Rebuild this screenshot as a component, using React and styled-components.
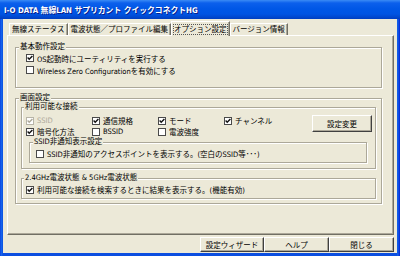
import React from "react";
import styled, { createGlobalStyle } from "styled-components";

const GlobalStyle = createGlobalStyle`
  html, body {
    margin: 0;
    padding: 0;
    background: #ece9d8;
  }
  body {
    font-family: "DejaVu Sans Condensed", "Liberation Sans", "Noto Sans CJK JP", sans-serif;
    font-size: 7.5px;
    color: #000;
  }
`;

const Window = styled.div`
  width: 400px;
  height: 256px;
  display: flex;
  flex-direction: column;
  background: linear-gradient(to right, #0831d9 0, #166aee 1px, #0b4ee0 3px, #0b4ee0 397px, #166aee 398px, #0831d9 399px);
  overflow: hidden;
`;

const TitleBar = styled.div`
  height: 19px;
  flex: none;
  display: flex;
  align-items: center;
  padding: 0 0 1px 4px;
  box-sizing: border-box;
  background: linear-gradient(
    to bottom,
    #3b8cf5 0,
    #2b7cf2 1px,
    #0c60ec 3px,
    #0057e6 9px,
    #0054e3 14px,
    #0148cf 17px,
    #003ec0 19px
  );
  color: #fff;
  font-weight: bold;
  font-size: 7.8px;
  text-shadow: 1px 1px 0 #0a1e8a;
  white-space: nowrap;
`;

const Client = styled.div`
  flex: 1;
  margin: 0 3px 3px 3px;
  background: #ece9d8;
  display: flex;
  flex-direction: column;
`;

const TabRow = styled.div`
  height: 14px;
  margin-top: 2px;
  padding-left: 6px;
  display: flex;
  align-items: flex-end;
  position: relative;
  z-index: 1;
`;

const Tab = styled.div`
  box-sizing: border-box;
  height: ${(p) => (p.$active ? "15px" : "12px")};
  margin-bottom: ${(p) => (p.$active ? "-1px" : "0")};
  padding: ${(p) => (p.$active ? "1px 1px 0" : "0 2px")};
  display: flex;
  align-items: center;
  white-space: nowrap;
  background: #ece9d8;
  border-top: 1px solid #fff;
  border-left: 1px solid #fff;
  border-right: 1px solid #716f64;
  box-shadow: inset -1px 0 #aca899;
  line-height: 10px;
`;

const FocusLabel = styled.span`
  border: 1px dotted #555;
  line-height: 9px;
  padding: 0;
`;

const Panel = styled.div`
  box-sizing: border-box;
  height: 200px;
  margin: 0 3px 0 4px;
  padding: 11px 11px 0 7px;
  border: 1px solid;
  border-color: #fff #716f64 #716f64 #fff;
  box-shadow: inset -1px -1px #aca899;
  display: flex;
  flex-direction: column;
`;

const Group = styled.div`
  position: relative;
  border: 1px solid #aca899;
  box-shadow: inset 1px 1px #fff, 1px 1px #fff;
  margin: ${(p) => p.$margin || "0"};
  padding: ${(p) => p.$padding || "0"};
`;

const Legend = styled.span`
  position: absolute;
  top: -6px;
  left: ${(p) => p.$left || 3}px;
  padding: 0 1px;
  line-height: 10px;
  background: #ece9d8;
  white-space: nowrap;
`;

const CheckRow = styled.label`
  display: flex;
  align-items: center;
  gap: 3px;
  height: ${(p) => p.$h || 12}px;
  white-space: nowrap;
  color: ${(p) => (p.$disabled ? "#aca899" : "#000")};
`;

const Box = styled.span`
  box-sizing: border-box;
  width: 8px;
  height: 8px;
  flex: none;
  background: #fff;
  border: 1px solid ${(p) => (p.$disabled ? "#b8b5a8" : "#4a4a4a")};
  display: flex;
  align-items: center;
  justify-content: center;
`;

const TopArea = styled.div`
  display: flex;
  align-items: flex-start;
`;

const CheckGrid = styled.div`
  display: grid;
  grid-template-columns: repeat(4, 66px);
  grid-auto-rows: 11px;
`;

const ClassicButton = styled.button`
  box-sizing: border-box;
  font: inherit;
  color: #000;
  background: #ece9d8;
  border: 1px solid;
  border-color: #fff #404040 #404040 #fff;
  box-shadow: inset -1px -1px #aca899;
  padding: 0;
  margin: 0;
  width: ${(p) => p.$w}px;
  height: ${(p) => p.$h}px;
  white-space: nowrap;
`;

const SideButton = styled(ClassicButton)`
  margin-left: auto;
  margin-right: 3px;
`;

const ButtonBar = styled.div`
  display: flex;
  justify-content: flex-end;
  margin-top: 2px;
  padding-right: 3px;
`;

const Check = ({ checked, disabled }) => (
  <Box $disabled={disabled}>
    {checked && (
      <svg width="6" height="6" viewBox="0 0 6 6">
        <polyline
          points="0.6,2.6 2.2,4.3 5.4,0.9"
          fill="none"
          stroke={disabled ? "#aca899" : "#111"}
          strokeWidth="1.4"
        />
      </svg>
    )}
  </Box>
);

const Option = ({ checked, disabled, h, children }) => (
  <CheckRow $disabled={disabled} $h={h}>
    <Check checked={checked} disabled={disabled} />
    <span>{children}</span>
  </CheckRow>
);

const tabs = ["無線ステータス", "電波状態／プロファイル編集", "オプション設定", "バージョン情報"];

const connections = [
  { label: "SSID", checked: true, disabled: true },
  { label: "通信規格", checked: true },
  { label: "モード", checked: true },
  { label: "チャンネル", checked: true },
  { label: "暗号化方法", checked: true },
  { label: "BSSID", checked: false },
  { label: "電波強度", checked: false },
];

export default function App() {
  return (
    <>
      <GlobalStyle />
      <Window>
        <TitleBar>I-O DATA 無線LAN サプリカント クイックコネクトHG</TitleBar>
        <Client>
          <TabRow>
            {tabs.map((t, i) =>
              i === 2 ? (
                <Tab key={t} $active>
                  <FocusLabel>{t}</FocusLabel>
                </Tab>
              ) : (
                <Tab key={t}>{t}</Tab>
              )
            )}
          </TabRow>
          <Panel>
            <Group $padding="4px 0 11px 10px">
              <Legend $left={3}>基本動作設定</Legend>
              <Option checked>OS起動時にユーティリティを実行する</Option>
              <Option>Wireless Zero Configurationを有効にする</Option>
            </Group>

            <Group $margin="10px 0 0 0" $padding="8px 5px 4px 5px">
              <Legend $left={3}>画面設定</Legend>

              <Group $padding="7px 0 5px 4px">
                <Legend $left={2}>利用可能な接続</Legend>
                <TopArea>
                  <CheckGrid>
                    {connections.map((c) => (
                      <Option key={c.label} checked={c.checked} disabled={c.disabled} h={11}>
                        {c.label}
                      </Option>
                    ))}
                  </CheckGrid>
                  <SideButton $w={60} $h={17}>
                    設定変更
                  </SideButton>
                </TopArea>
                <Group $margin="5px 8px 0 3px" $padding="5px 0 3px 6px">
                  <Legend $left={3}>SSID非通知表示設定</Legend>
                  <Option h={11}>SSID非通知のアクセスポイントを表示する。(空白のSSID等･･･)</Option>
                </Group>
              </Group>

              <Group $margin="9px 0 0 0" $padding="5px 0 3px 4px">
                <Legend $left={2}>2.4GHz電波状態 &amp; 5GHz電波状態</Legend>
                <Option checked h={11}>
                  利用可能な接続を検索するときに結果を表示する。(機能有効)
                </Option>
              </Group>
            </Group>
          </Panel>
          <ButtonBar>
            <ClassicButton $w={64} $h={15}>設定ウィザード</ClassicButton>
            <ClassicButton $w={65} $h={15}>ヘルプ</ClassicButton>
            <ClassicButton $w={65} $h={15}>閉じる</ClassicButton>
          </ButtonBar>
        </Client>
      </Window>
    </>
  );
}
